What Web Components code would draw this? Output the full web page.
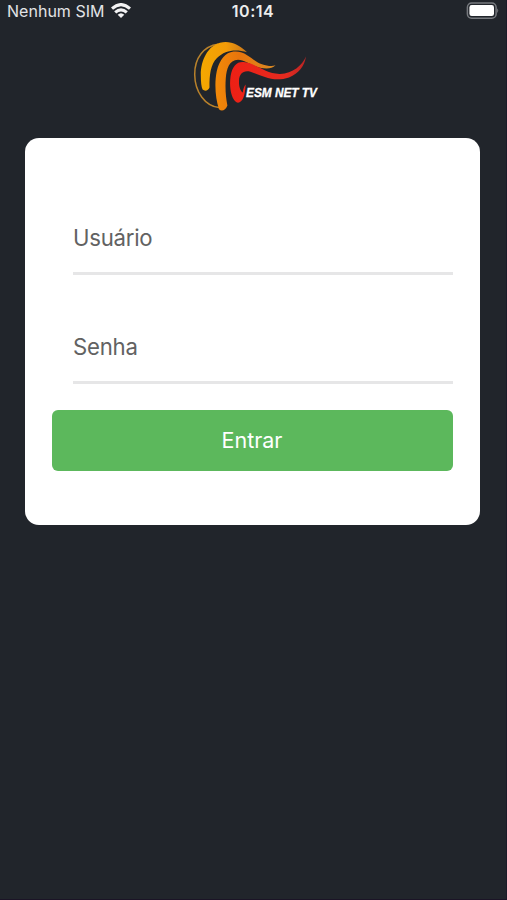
<!DOCTYPE html>
<html lang="pt-BR">
<head>
<meta charset="utf-8">
<meta name="viewport" content="width=device-width, initial-scale=1">
<title>ESM NET TV</title>
<style>
html,body{margin:0;height:100%;background:#21252b}
body{font-family:Inter,"Liberation Sans",sans-serif;overflow:hidden}
</style>
</head>
<body>
<login-screen></login-screen>
<script>
const define = (name, html) => customElements.define(name, class extends HTMLElement {
  constructor() {
    super();
    this.attachShadow({mode: 'open'}).innerHTML = html;
  }
});

define('status-bar', `
<style>
:host{display:grid;grid-template-columns:1fr auto 1fr;align-items:center;height:22px;padding:0 7px;color:#e2e3e5;font-size:16px;line-height:22px}
.left{display:flex;align-items:center;gap:6px;letter-spacing:.02px}
.time{font-weight:600;font-size:16px;letter-spacing:.5px;color:#eceded}
.right{justify-self:end;display:flex}
svg{display:block}
</style>
<div class="left"><span>Nenhum SIM</span>
<svg width="20" height="16" viewBox="0 0 20 16" fill="none" stroke="#f2f2f3" stroke-width="3.1"><path d="M1 5.7Q10-2.5 19 5.7M4.2 9.4Q10 4.2 15.8 9.4"/><path d="M10 15.1 6.7 11.8Q10 8.8 13.3 11.8Z" fill="#f2f2f3" stroke="none"/></svg></div>
<span class="time">10:14</span>
<div class="right"><svg width="33" height="18" viewBox="0 0 33 18"><rect x="1.4" y="1" width="28.7" height="15.2" rx="4.3" fill="none" stroke="#777a7f" stroke-width="1.5"/><rect x="3.4" y="3.1" width="24.6" height="10.9" rx="2.3" fill="#fff"/><path d="M31.2 6.2q2 2.4 0 4.8z" fill="#777a7f"/></svg></div>`);

define('brand-logo', `
<style>:host{display:block;width:134px;height:80px}svg{display:block}</style>
<svg width="134" height="80" viewBox="190 36 134 80" role="img" aria-label="ESM NET TV">
<defs>
<linearGradient id="y" x1="0" y1="0" x2="1" y2="0"><stop offset="0" stop-color="#f5a800"/><stop offset=".55" stop-color="#f39b08"/><stop offset="1" stop-color="#c9761b"/></linearGradient>
<linearGradient id="o" x1="0" y1="0" x2="1" y2="0"><stop offset="0" stop-color="#f28a08"/><stop offset=".4" stop-color="#e8740c"/><stop offset="1" stop-color="#d88a24"/></linearGradient>
<linearGradient id="r" x1="0" y1="0" x2="1" y2="0"><stop offset="0" stop-color="#ee2015"/><stop offset=".75" stop-color="#e52b20"/><stop offset="1" stop-color="#b82424"/></linearGradient>
</defs>
<path d="M218 44.2C204 45.8 194.5 58 194.7 74.5C194.9 92 205 106 219 107.6" fill="none" stroke="#b9822b" stroke-width="1.5"/>
<path d="M247 52.3C239 44 229 40.3 220 42.8C208 46 200.8 60 200.8 75C200.8 82 201.4 87 202.6 89.6C205 91.6 208.5 90.6 209.5 87.5C209.3 75 210.5 64.5 217 58C225 50 236 48.8 247 52.3Z" fill="url(#y)"/>
<path d="M219 109.2C215.4 99 214.2 83 216.8 71C219.6 59.5 225.6 52.6 233.5 51.6C246 50 252 61 262 64.2C267 65.8 272 66.7 275.5 65.2C272 69 266 68.8 260 67.7C251 65.8 245 59.8 238 59.8C229 60 226.7 69 225.8 78C225 89 225.9 98 227.4 105.5C225.5 110.4 221.6 112 219 109.2Z" fill="url(#o)"/>
<path d="M236.5 102.3C231 98.5 229 87 230.6 76C232.4 66 237 61.5 243.5 62.1C256 63 265 74.2 280 73.9C293 73.4 302 65.5 306 56.5C304.5 66 299 73.5 289 77.5C273 83 260 74.9 250.5 71.8C243.5 70 239.2 73.5 239 81C238.8 87 240.4 91 242.8 92.6C243.2 89 244 86.5 245.7 84.5C245 92 244.4 99.5 240 102C238.8 102.8 237.6 102.9 236.5 102.3Z" fill="url(#r)"/>
<text x="246" y="96.9" font-family="Liberation Sans,Arial,sans-serif" font-size="12" font-weight="700" font-style="italic" fill="#fff" stroke="#fff" stroke-width=".3" textLength="71" lengthAdjust="spacingAndGlyphs">ESM NET TV</text>
</svg>`);

define('form-field', `
<style>
:host{display:flex;align-items:center;box-sizing:border-box;height:73px;margin-left:21px;padding-top:1px;border-bottom:3px solid #e6e6e7;color:#626262;font-size:22.2px;letter-spacing:-.25px}
</style><slot></slot>`);

define('submit-button', `
<style>
:host{display:block}
button{display:block;width:100%;height:61px;margin:0;padding:0 1px 2px 0;border:0;border-radius:6px;background:#5cb85c;color:#fff;font:400 21.5px Inter,"Liberation Sans",sans-serif;letter-spacing:0}
</style><button type="button"><slot></slot></button>`);

define('login-card', `
<style>
:host{display:flex;flex-direction:column;box-sizing:border-box;width:455px;height:387px;padding:64px 27px 0;border-radius:14px;background:#fff}
</style><slot></slot>`);

define('login-screen', `
<style>
:host{display:flex;flex-direction:column;box-sizing:border-box;height:100vh;background:#21252b;border-right:1px solid #1b1b29;border-bottom:1px solid #1b1426}
brand-logo{margin:14px 0 0 190px}
login-card{margin:22px 0 0 25px}
.second{margin-top:35.5px}
submit-button{margin-top:26.5px}
</style>
<status-bar></status-bar>
<brand-logo></brand-logo>
<login-card>
<form-field>Usuário</form-field>
<form-field class="second">Senha</form-field>
<submit-button>Entrar</submit-button>
</login-card>`);
</script>
</body>
</html>
